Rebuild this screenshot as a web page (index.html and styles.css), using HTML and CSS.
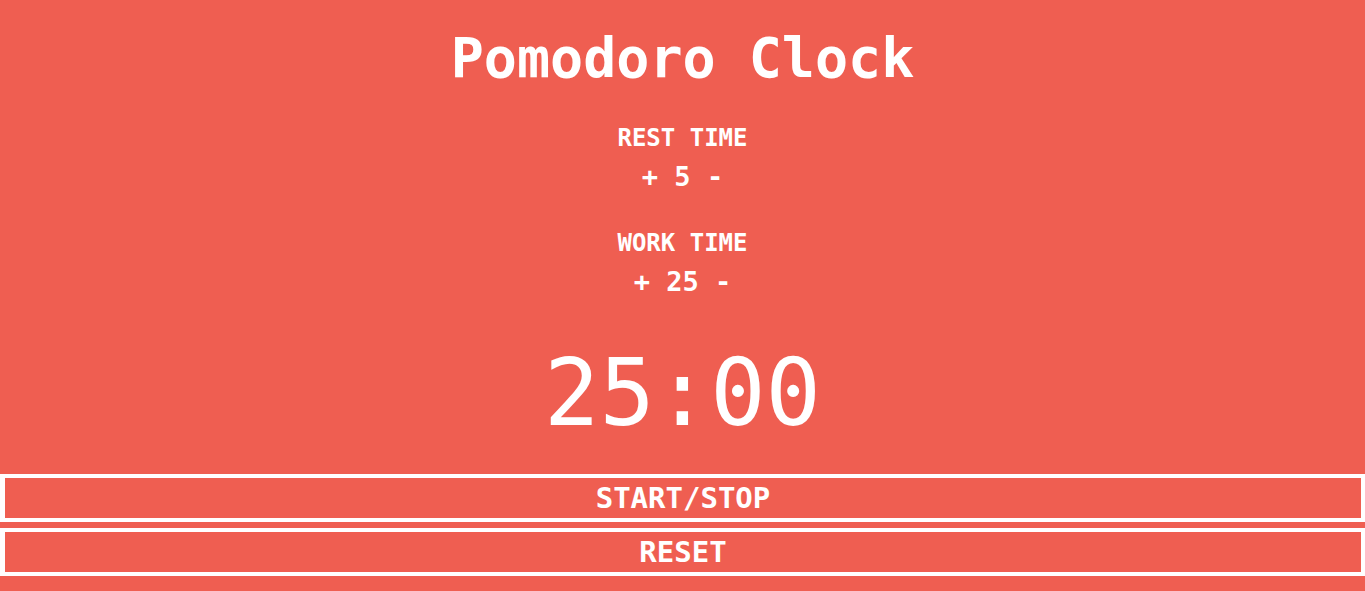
FILE: index.html
```html
<!DOCTYPE html>
<html lang="en">
<head>
<meta charset="utf-8">
<title>Pomodoro Clock</title>
<link rel="stylesheet" href="styles.css">
</head>
<body>
<main class="app">
  <h1 class="title">Pomodoro Clock</h1>
  <section class="setting setting-rest">
    <div class="label">REST TIME</div>
    <div class="control"><span class="adj">+</span> <span class="value">5</span> <span class="adj">-</span></div>
  </section>
  <section class="setting setting-work">
    <div class="label">WORK TIME</div>
    <div class="control"><span class="adj">+</span> <span class="value">25</span> <span class="adj">-</span></div>
  </section>
  <div class="timer">25:00</div>
  <div class="actions">
    <button class="action" type="button">START/STOP</button>
    <button class="action" type="button">RESET</button>
  </div>
</main>
</body>
</html>
```

FILE: styles.css
```css
html, body {
  margin: 0;
  padding: 0;
}
body {
  background: #ef5e51;
  color: #ffffff;
  font-family: "DejaVu Sans Mono", "Liberation Mono", monospace;
  height: 591px;
  overflow: hidden;
}
.app {
  display: flex;
  flex-direction: column;
  align-items: center;
  text-align: center;
}
.title {
  margin: 30px 0 0;
  font-size: 55px;
  line-height: 56px;
  font-weight: bold;
}
.setting {
  display: flex;
  flex-direction: column;
  align-items: center;
}
.setting-rest {
  margin-top: 40px;
}
.setting-work {
  margin-top: 40px;
}
.label {
  font-size: 24px;
  line-height: 25px;
  font-weight: bold;
}
.control {
  margin-top: 12px;
  font-size: 27px;
  line-height: 28px;
  font-weight: bold;
}
.timer {
  margin-top: 52px;
  font-size: 92px;
  line-height: 92px;
}
.actions {
  align-self: stretch;
  margin-top: 34px;
  display: flex;
  flex-direction: column;
  gap: 6px;
}
.action {
  display: block;
  width: 100%;
  height: 48px;
  box-sizing: border-box;
  margin: 0;
  padding: 0;
  background: transparent;
  border: 4px solid #ffffff;
  border-left-width: 5px;
  color: #ffffff;
  font-family: "DejaVu Sans Mono", "Liberation Mono", monospace;
  font-size: 29px;
  line-height: 40px;
  font-weight: bold;
}
```
